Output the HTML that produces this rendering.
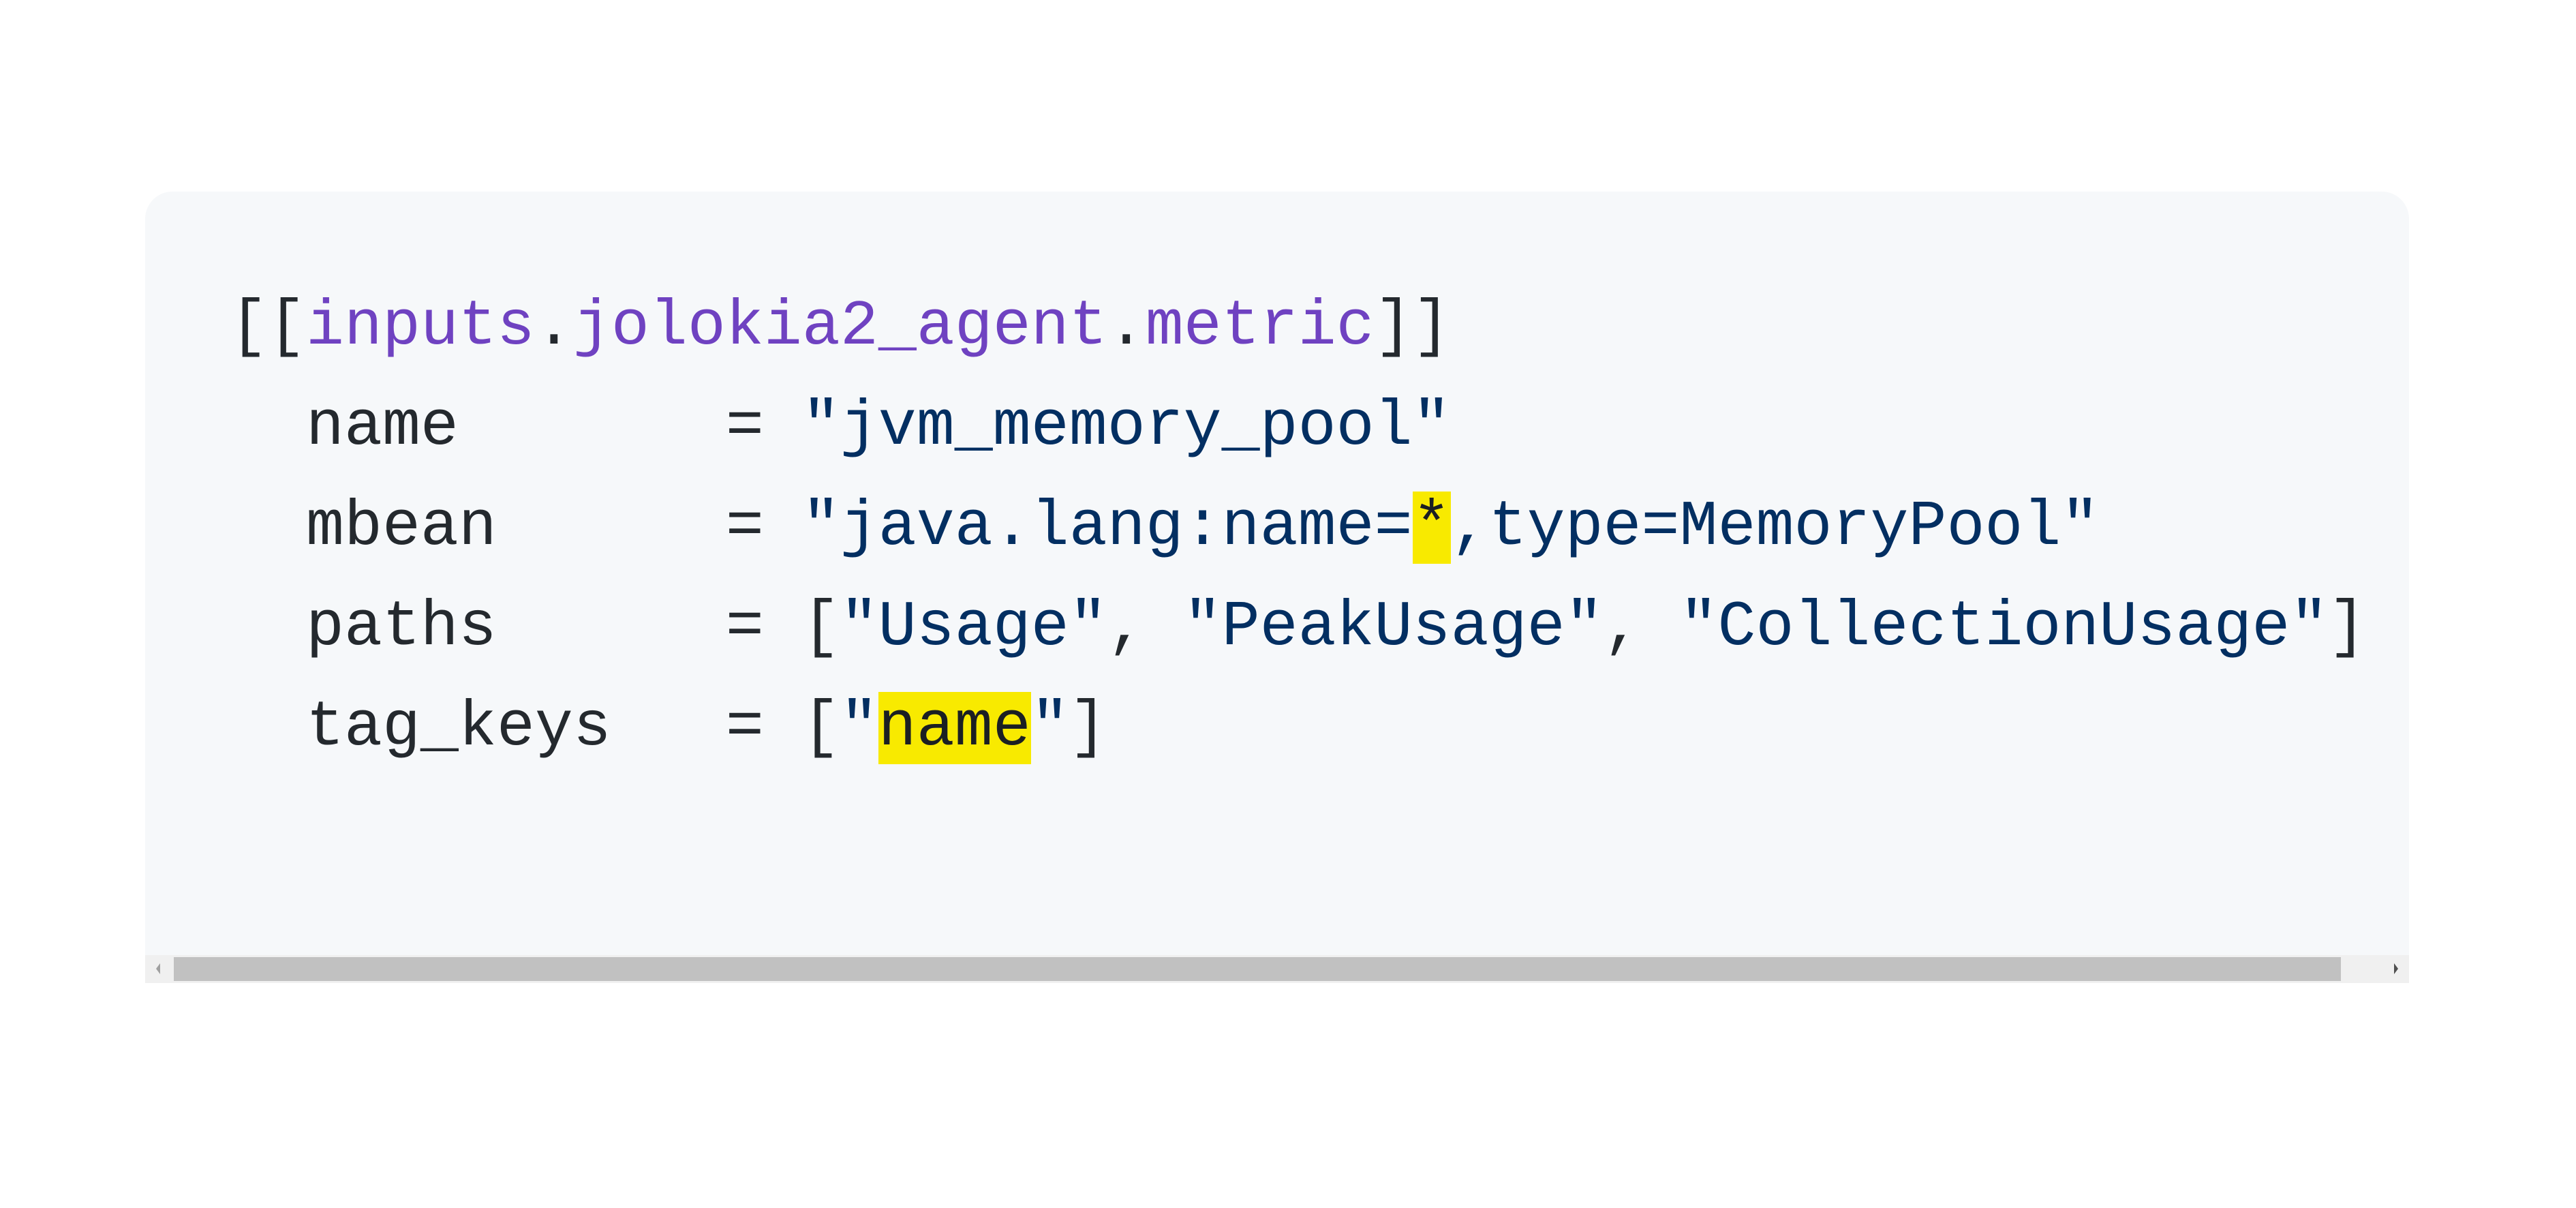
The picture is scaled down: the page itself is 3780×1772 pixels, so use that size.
<!DOCTYPE html>
<html><head><meta charset="utf-8"><style>
html,body{margin:0;padding:0;background:#fff;width:3780px;height:1772px;overflow:hidden}
.blk{position:absolute;left:213px;top:281px;width:3322px;height:1161px;background:#f6f8fa;border-radius:40px 40px 0 0;overflow:hidden}
pre{margin:0;position:absolute;left:124px;top:126px;font-family:"Liberation Mono",monospace;font-size:93.3px;line-height:147px;color:#24292e}
.p{color:#6f42c1}.s{color:#032f62}.h{background:#f8ea00;color:#1b1f23}
.track{position:absolute;left:0;right:0;top:1120px;height:41px;background:#f0f0f0}
.thumb{position:absolute;left:42px;right:100px;top:3px;height:35px;background:#c1c1c1}
.al{position:absolute;left:16px;top:12px;width:0;height:0;border-top:8px solid transparent;border-bottom:8px solid transparent;border-right:6px solid #a0a0a0}
.ar{position:absolute;right:16px;top:12px;width:0;height:0;border-top:8px solid transparent;border-bottom:8px solid transparent;border-left:6px solid #505050}
</style></head><body>
<div class="blk">
<pre>[[<span class="p">inputs</span>.<span class="p">jolokia2_agent</span>.<span class="p">metric</span>]]
  name       = <span class="s">"jvm_memory_pool"</span>
  mbean      = <span class="s">"java.lang:name=<span class="h">*</span>,type=MemoryPool"</span>
  paths      = [<span class="s">"Usage"</span>, <span class="s">"PeakUsage"</span>, <span class="s">"CollectionUsage"</span>]
  tag_keys   = [<span class="s">"<span class="h">name</span>"</span>]</pre>
<div class="track"><div class="thumb"></div><div class="al"></div><div class="ar"></div></div>
</div>
</body></html>
